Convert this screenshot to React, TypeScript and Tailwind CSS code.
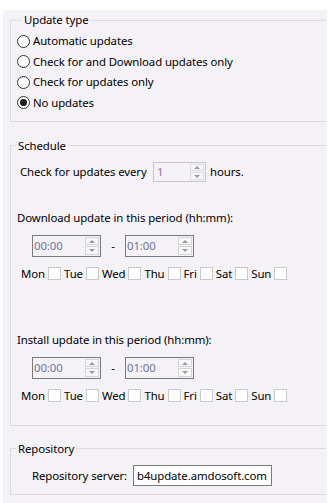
import React from 'react';

const days = ['Mon', 'Tue', 'Wed', 'Thu', 'Fri', 'Sat', 'Sun'];

const Radio = ({ label, checked }: { label: string; checked?: boolean }) => (
  <div className="flex h-[20.5px] items-center gap-[3px]">
    <span className="flex h-[13px] w-[13px] items-center justify-center rounded-full border border-[#333333] bg-white">
      {checked && <span className="h-[7px] w-[7px] rounded-full bg-[#1a1a1a]" />}
    </span>
    <span>{label}</span>
  </div>
);

const SpinButtons = ({ light }: { light?: boolean }) => (
  <div className="flex h-full w-[15px] flex-col gap-px py-px pr-px">
    <div className={`flex flex-1 items-center justify-center border ${light ? 'border-[#dcdcdc]' : 'border-[#d4d4d4]'} bg-[#f7f6f8]`}>
      <span className="h-0 w-0 border-x-[3px] border-b-[3px] border-x-transparent border-b-[#9a9a9a]" />
    </div>
    <div className={`flex flex-1 items-center justify-center border ${light ? 'border-[#dcdcdc]' : 'border-[#d4d4d4]'} bg-[#f7f6f8]`}>
      <span className="h-0 w-0 border-x-[3px] border-t-[3px] border-x-transparent border-t-[#9a9a9a]" />
    </div>
  </div>
);

const TimeBox = ({ value }: { value: string }) => (
  <div className="flex h-[22px] w-[69px] items-center border border-[#7a7a7a] bg-[#f4f2f6]">
    <span className="flex-1 pl-px text-[#6e72a0]">{value}</span>
    <SpinButtons />
  </div>
);

const Period = ({ label, top }: { label: string; top: string }) => (
  <>
    <div className={`${top} pl-[6px] leading-4`}>{label}</div>
    <div className="mt-[9px] flex items-center pl-[21px]">
      <TimeBox value="00:00" />
      <span className="w-[24px] text-center">-</span>
      <TimeBox value="01:00" />
    </div>
    <div className="mt-[9px] flex items-center gap-[3px] pl-[10px] leading-4">
      {days.map((d) => (
        <React.Fragment key={d}>
          <span>{d}</span>
          <span className="h-[13px] w-[13px] border border-[#c9c9c9] bg-white" />
        </React.Fragment>
      ))}
    </div>
  </>
);

const Group = ({ title, className, children }: { title: string; className: string; children: React.ReactNode }) => (
  <fieldset className={`ml-[7px] w-[316px] border border-r-0 border-[#dddbe0] ${className}`}>
    <legend className="ml-[5px] px-[2px] leading-4">{title}</legend>
    {children}
  </fieldset>
);

export default function App() {
  return (
    <div
      className="h-[503px] w-[329px] whitespace-nowrap bg-white pt-[10px] pl-[3px] text-[11.4px] tracking-[-0.1px] text-black"
      style={{ fontFamily: '"Noto Sans", sans-serif' }}
    >
      <div className="h-[493px] w-[324px] overflow-hidden bg-[#f4f2f6] pt-[2px]">
        <Group title="Update type" className="pb-[8px] pl-[6px]">
          <div className="mt-[2.75px]">
            <Radio label="Automatic updates" />
            <Radio label="Check for and Download updates only" />
            <Radio label="Check for updates only" />
            <Radio label="No updates" checked />
          </div>
        </Group>

        <Group title="Schedule" className="mt-[16px] pb-[21px]">
          <div className="mt-[8px] flex items-center pl-[9px]">
            <span className="w-[133px]">Check for updates every</span>
            <div className="flex h-[20px] w-[53px] items-center border border-[#c8c6cc] bg-[#f4f2f6]">
              <span className="flex-1 pl-[3px] text-[#8c7a9c]">1</span>
              <SpinButtons light />
            </div>
            <span className="ml-[4px]">hours.</span>
          </div>
          <Period label="Download update in this period (hh:mm):" top="mt-[28px]" />
          <Period label="Install update in this period (hh:mm):" top="mt-[50px]" />
        </Group>

        <Group title="Repository" className="mt-[15px] pb-[8px]">
          <div className="mt-[8px] flex items-center pl-[21px]">
            <span className="w-[101px]">Repository server:</span>
            <div className="flex h-[21px] w-[139px] items-center border border-[#7a7a7a] bg-white pl-[3px]">
              b4update.amdosoft.com
            </div>
          </div>
        </Group>
      </div>
    </div>
  );
}
